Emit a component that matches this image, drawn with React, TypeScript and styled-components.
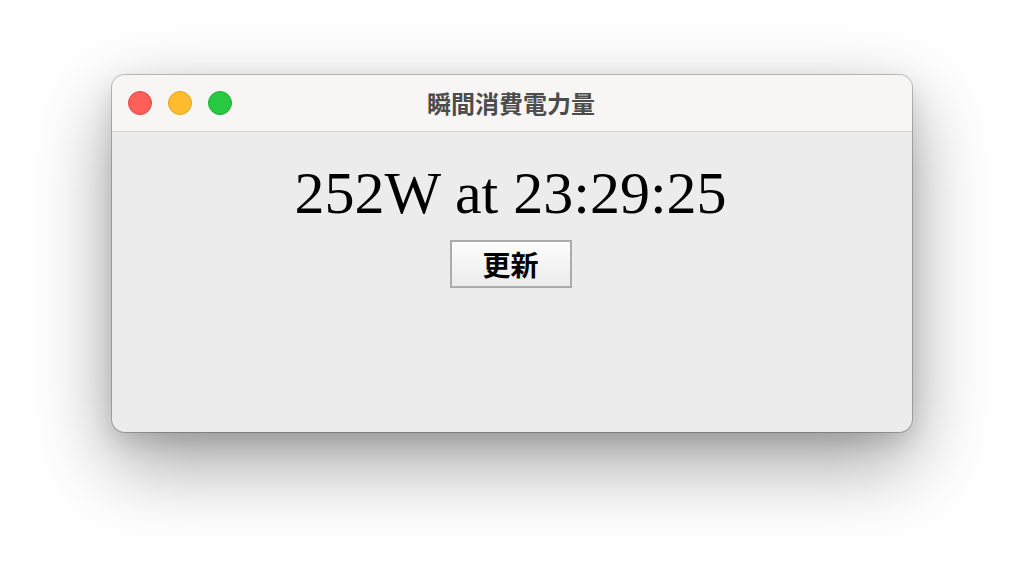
import React from "react";
import styled, { createGlobalStyle } from "styled-components";

const Global = createGlobalStyle`
  html, body { margin: 0; padding: 0; background: #ffffff; }
  body { width: 1024px; height: 580px; overflow: hidden; }
`;

const Stage = styled.div`
  width: 1024px;
  height: 580px;
  padding: 75px 0 0 112px;
  box-sizing: border-box;
`;

const Window = styled.div`
  width: 800px;
  height: 357px;
  border-radius: 13px;
  overflow: hidden;
  background: #ececec;
  box-shadow: 0 0 0 1px rgba(0, 0, 0, 0.22), 0 30px 80px rgba(0, 0, 0, 0.38),
    0 10px 24px rgba(0, 0, 0, 0.12);
  display: flex;
  flex-direction: column;
`;

const TitleBar = styled.div`
  height: 56px;
  flex: none;
  background: #f7f6f5;
  border-bottom: 1px solid #d2d1d0;
  display: grid;
  grid-template-columns: 1fr auto 1fr;
  align-items: center;
  padding: 0 16px;
`;

const Lights = styled.div`
  display: flex;
  gap: 16px;
`;

const Light = styled.span<{ $fill: string; $edge: string }>`
  width: 24px;
  height: 24px;
  border-radius: 50%;
  box-sizing: border-box;
  background: ${(p) => p.$fill};
  border: 1px solid ${(p) => p.$edge};
`;

const Title = styled.div`
  font-family: "Noto Sans CJK JP", "Noto Sans CJK SC", sans-serif;
  font-weight: 700;
  font-size: 24px;
  color: #4c4c4c;
  line-height: 1;
  margin-left: -2px;
`;

const Content = styled.div`
  flex: 1;
  display: flex;
  flex-direction: column;
  align-items: center;
  padding: 28px 3px 0 0;
`;

const Reading = styled.h1`
  margin: 0;
  font-family: "Liberation Serif", "Times New Roman", serif;
  font-weight: 400;
  font-size: 60px;
  line-height: 66px;
  color: #000;
`;

const RefreshButton = styled.button`
  margin-top: 14px;
  width: 122px;
  height: 48px;
  box-sizing: border-box;
  border: 2px solid #ababab;
  background: linear-gradient(#fdfdfd, #ebebeb);
  font-family: "Noto Sans CJK JP", "Noto Sans CJK SC", serif;
  font-weight: 700;
  font-size: 28px;
  line-height: 1;
  color: #000;
  padding: 0;
  display: flex;
  align-items: center;
  justify-content: center;
`;

export default function App() {
  return (
    <>
      <Global />
      <Stage>
        <Window>
          <TitleBar>
            <Lights>
              <Light $fill="#ff5f57" $edge="#e2463f" />
              <Light $fill="#febc2e" $edge="#e1a325" />
              <Light $fill="#28c840" $edge="#1fad32" />
            </Lights>
            <Title>瞬間消費電力量</Title>
            <div />
          </TitleBar>
          <Content>
            <Reading>252W at 23:29:25</Reading>
            <RefreshButton>更新</RefreshButton>
          </Content>
        </Window>
      </Stage>
    </>
  );
}
